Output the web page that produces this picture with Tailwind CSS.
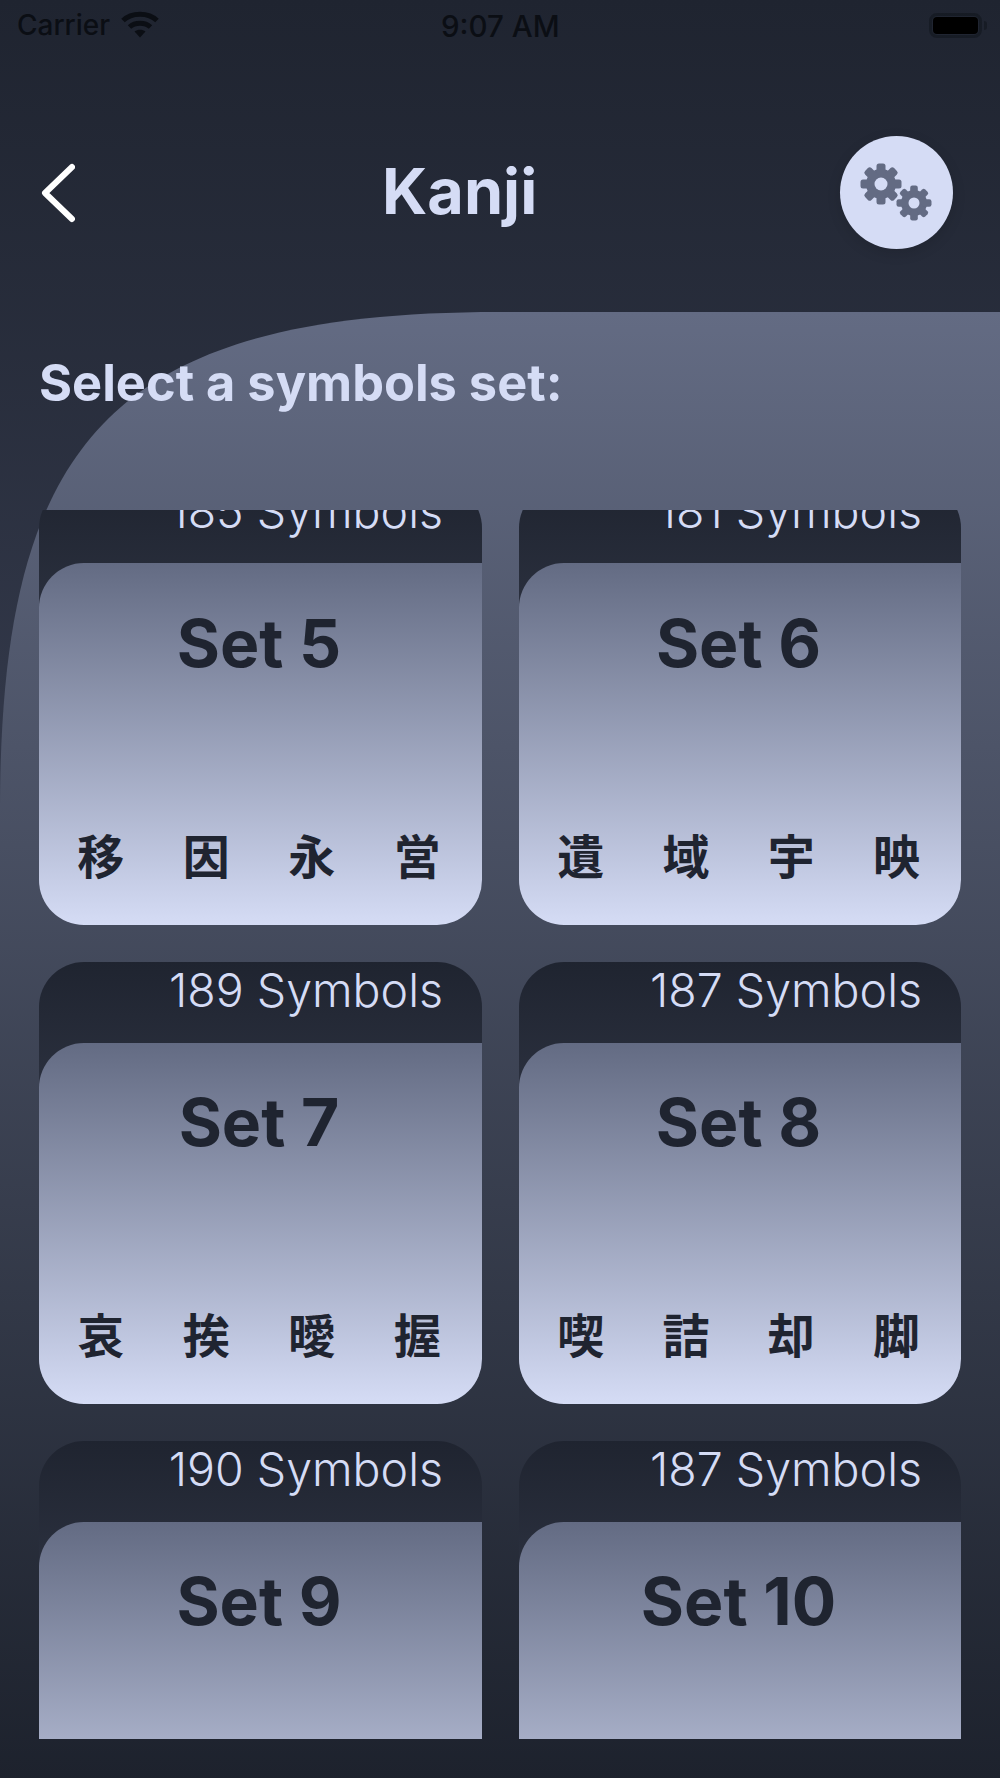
<!DOCTYPE html>
<html lang="en">
<head>
  <meta charset="UTF-8">
  <title>Kanji</title>
  <script src="https://cdn.jsdelivr.net/npm/@tailwindcss/browser@4"></script>
</head>
<body class="font-['Inter',sans-serif]">
<div class="relative w-[1000px] h-[1778px] overflow-hidden bg-linear-to-b from-[#1f2430] to-[#4f5670]">

  <!-- background panel -->
  <div class="absolute left-0 top-[312px] w-[1000px] h-[1466px] bg-linear-to-b from-[#636b83] to-[#1d222d] [clip-path:path('M0_1466L0_500C0_130_110_0_500_0L1000_0L1000_1466Z')]"></div>

  <div class="relative">
    <!-- STATUS BAR -->
    <div class="relative h-[50px] flex items-center pl-[17px] pr-[13px] text-[#0b0e14] text-[28px] font-[450]">
      <span>Carrier</span>
      <svg class="ml-[11px] mt-[-3px]" width="38" height="28" viewBox="0 0 38 28" fill="none" stroke="#0b0e14" stroke-width="5">
        <path d="M2 10.5C10.5 2 27.5 2 36 10.5"/>
        <path d="M8.5 17C14 12 24 12 29.5 17"/>
        <path d="M13.5 21.5C16.5 19 21.5 19 24.5 21.5L19 27.5Z" fill="#0b0e14" stroke="none"/>
      </svg>
      <span class="absolute left-[441px] top-[8px] leading-[36px] text-[29.5px] font-medium">9:07 AM</span>
      <div class="ml-auto flex items-center">
        <div class="w-[53px] h-[25px] rounded-[8px] border-[3px] border-[#0b0e14]/40 p-[1px]">
          <div class="w-full h-full rounded-[4px] bg-black"></div>
        </div>
        <div class="ml-[2px] w-[3px] h-[9px] rounded-r-[3px] bg-[#0b0e14]/40"></div>
      </div>
    </div>

    <!-- HEADER -->
    <header class="relative mt-[86px] h-[113px] flex items-center justify-between pl-[41px] pr-[47px]">
      <svg width="34" height="60" viewBox="0 0 34 60" fill="none" stroke="#ffffff" stroke-width="6" stroke-linecap="round" stroke-linejoin="round">
        <path d="M31 4L4 30L31 56"/>
      </svg>
      <h1 class="absolute left-[382px] top-[17px] text-[#d5dcf5] text-[63px] leading-[76px] font-bold">Kanji</h1>
      <button class="w-[113px] h-[113px] rounded-full bg-[#d5dcf5] shadow-[0_4px_14px_rgba(0,0,0,0.12)] flex items-center justify-center">
        <svg width="113" height="113" viewBox="0 0 113 113" fill="#636b83">
          <g transform="translate(41 48)">
            <circle r="15"/>
            <rect x="-4.5" y="-20.5" width="9" height="41" rx="2.5"/>
            <rect x="-4.5" y="-20.5" width="9" height="41" rx="2.5" transform="rotate(45)"/>
            <rect x="-4.5" y="-20.5" width="9" height="41" rx="2.5" transform="rotate(90)"/>
            <rect x="-4.5" y="-20.5" width="9" height="41" rx="2.5" transform="rotate(135)"/>
            <circle r="6.5" fill="#d5dcf5"/>
          </g>
          <g transform="translate(74 67)">
            <circle r="13"/>
            <rect x="-3.8" y="-17.5" width="7.6" height="35" rx="2.2"/>
            <rect x="-3.8" y="-17.5" width="7.6" height="35" rx="2.2" transform="rotate(45)"/>
            <rect x="-3.8" y="-17.5" width="7.6" height="35" rx="2.2" transform="rotate(90)"/>
            <rect x="-3.8" y="-17.5" width="7.6" height="35" rx="2.2" transform="rotate(135)"/>
            <circle r="5.5" fill="#d5dcf5"/>
          </g>
        </svg>
      </button>
    </header>

    <h2 class="mt-[102px] pl-[39px] text-[#d5dcf5] text-[50.5px] leading-[64px] font-bold">Select a symbols set:</h2>

    <!-- SETS LIST -->
    <div class="mt-[95px] h-[1229px] overflow-hidden px-[39px]">
      <div class="mt-[-27px] grid grid-cols-[443px_442px] gap-x-[37px] gap-y-[37px]">

        <div class="h-[442px] rounded-[45px] overflow-hidden bg-linear-to-b from-[#1f2430] to-[#4a5064]">
          <p class="h-[80px] pr-[39px] text-right text-[#d5dcf5] text-[46.5px] leading-[56px] font-[350]">185 Symbols</p>
          <div class="h-[362px] rounded-tl-[45px] pt-[45px] pb-[40px] pl-[9px] pr-[12px] flex flex-col justify-between bg-linear-to-b from-[#636b83] to-[#d5dcf5]">
            <h3 class="text-center text-[#1f2430] text-[66px] leading-[70px] font-bold">Set 5</h3>
            <div class="grid grid-cols-4 text-center text-[#1f2430] text-[47px] leading-[56px] font-bold font-['Inter','Noto_Sans_CJK_JP',sans-serif]">
              <span>移</span><span>因</span><span>永</span><span>営</span>
            </div>
          </div>
        </div>

        <div class="h-[442px] rounded-[45px] overflow-hidden bg-linear-to-b from-[#1f2430] to-[#4a5064]">
          <p class="h-[80px] pr-[39px] text-right text-[#d5dcf5] text-[46.5px] leading-[56px] font-[350]">181 Symbols</p>
          <div class="h-[362px] rounded-tl-[45px] pt-[45px] pb-[40px] pl-[9px] pr-[12px] flex flex-col justify-between bg-linear-to-b from-[#636b83] to-[#d5dcf5]">
            <h3 class="text-center text-[#1f2430] text-[66px] leading-[70px] font-bold">Set 6</h3>
            <div class="grid grid-cols-4 text-center text-[#1f2430] text-[47px] leading-[56px] font-bold font-['Inter','Noto_Sans_CJK_JP',sans-serif]">
              <span>遺</span><span>域</span><span>宇</span><span>映</span>
            </div>
          </div>
        </div>

        <div class="h-[442px] rounded-[45px] overflow-hidden bg-linear-to-b from-[#1f2430] to-[#4a5064]">
          <p class="h-[81px] pr-[39px] text-right text-[#d5dcf5] text-[46.5px] leading-[56px] font-[350]">189 Symbols</p>
          <div class="h-[361px] rounded-tl-[45px] pt-[44px] pb-[40px] pl-[9px] pr-[12px] flex flex-col justify-between bg-linear-to-b from-[#636b83] to-[#d5dcf5]">
            <h3 class="text-center text-[#1f2430] text-[66px] leading-[70px] font-bold">Set 7</h3>
            <div class="grid grid-cols-4 text-center text-[#1f2430] text-[47px] leading-[56px] font-bold font-['Inter','Noto_Sans_CJK_JP',sans-serif]">
              <span>哀</span><span>挨</span><span>曖</span><span>握</span>
            </div>
          </div>
        </div>

        <div class="h-[442px] rounded-[45px] overflow-hidden bg-linear-to-b from-[#1f2430] to-[#4a5064]">
          <p class="h-[81px] pr-[39px] text-right text-[#d5dcf5] text-[46.5px] leading-[56px] font-[350]">187 Symbols</p>
          <div class="h-[361px] rounded-tl-[45px] pt-[44px] pb-[40px] pl-[9px] pr-[12px] flex flex-col justify-between bg-linear-to-b from-[#636b83] to-[#d5dcf5]">
            <h3 class="text-center text-[#1f2430] text-[66px] leading-[70px] font-bold">Set 8</h3>
            <div class="grid grid-cols-4 text-center text-[#1f2430] text-[47px] leading-[56px] font-bold font-['Inter','Noto_Sans_CJK_JP',sans-serif]">
              <span>喫</span><span>詰</span><span>却</span><span>脚</span>
            </div>
          </div>
        </div>

        <div class="h-[442px] rounded-[45px] overflow-hidden bg-linear-to-b from-[#1f2430] to-[#4a5064]">
          <p class="h-[81px] pr-[39px] text-right text-[#d5dcf5] text-[46.5px] leading-[56px] font-[350]">190 Symbols</p>
          <div class="h-[361px] rounded-tl-[45px] pt-[44px] pb-[40px] pl-[9px] pr-[12px] flex flex-col justify-between bg-linear-to-b from-[#636b83] to-[#d5dcf5]">
            <h3 class="text-center text-[#1f2430] text-[66px] leading-[70px] font-bold">Set 9</h3>
          </div>
        </div>

        <div class="h-[442px] rounded-[45px] overflow-hidden bg-linear-to-b from-[#1f2430] to-[#4a5064]">
          <p class="h-[81px] pr-[39px] text-right text-[#d5dcf5] text-[46.5px] leading-[56px] font-[350]">187 Symbols</p>
          <div class="h-[361px] rounded-tl-[45px] pt-[44px] pb-[40px] pl-[9px] pr-[12px] flex flex-col justify-between bg-linear-to-b from-[#636b83] to-[#d5dcf5]">
            <h3 class="text-center text-[#1f2430] text-[66px] leading-[70px] font-bold">Set 10</h3>
          </div>
        </div>

      </div>
    </div>
  </div>
</div>
</body>
</html>
